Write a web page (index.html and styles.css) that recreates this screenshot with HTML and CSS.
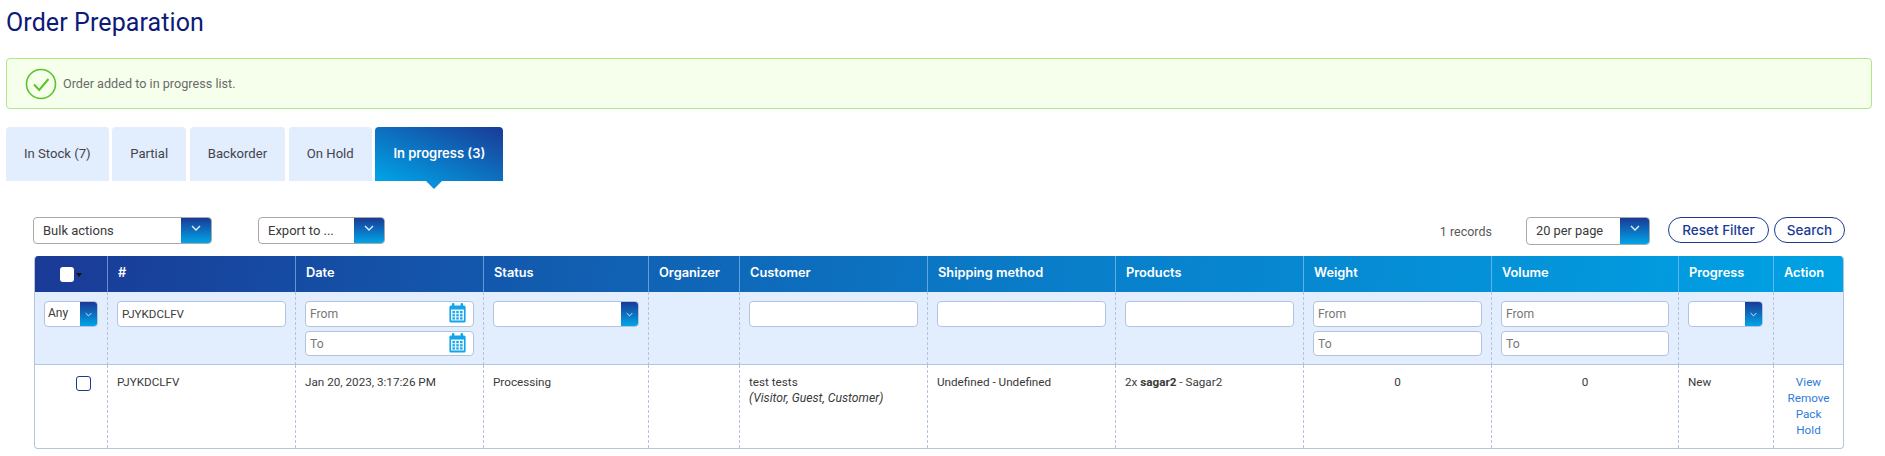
FILE: index.html
```html
<!DOCTYPE html>
<html lang="en">
<head>
<meta charset="utf-8">
<title>Order Preparation</title>
<link rel="stylesheet" href="styles.css">
</head>
<body>
<svg class="defs" width="0" height="0" aria-hidden="true">
  <symbol id="cal" viewBox="0 0 17 20">
    <rect x="3" y="0" width="2.4" height="5" rx="1" fill="#12a5ec"/>
    <rect x="11.6" y="0" width="2.4" height="5" rx="1" fill="#12a5ec"/>
    <path d="M2 2.5h13a1.6 1.6 0 0 1 1.6 1.6v13.8a1.6 1.6 0 0 1-1.6 1.6H2a1.6 1.6 0 0 1-1.6-1.6V4.100a1.600 1.600 0 0 1 1.600-1.600z" fill="#12a5ec"/>
    <rect x="2" y="6.500" width="13" height="11" fill="#eaf6fd"/>
    <g fill="#12a5ec">
      <rect x="3.500" y="8" width="2.400" height="2.200"/><rect x="7.300" y="8" width="2.400" height="2.200"/><rect x="11.100" y="8" width="2.400" height="2.200"/>
      <rect x="3.500" y="11.200" width="2.400" height="2.200"/><rect x="7.300" y="11.200" width="2.400" height="2.200"/><rect x="11.100" y="11.200" width="2.400" height="2.200"/>
      <rect x="3.500" y="14.300" width="2.400" height="2.200"/><rect x="7.300" y="14.300" width="2.400" height="2.200"/><rect x="11.100" y="14.300" width="2.400" height="2.200"/>
    </g>
  </symbol>
  <symbol id="chev" viewBox="0 0 10 6">
    <path d="M1 1l4 4 4-4" fill="none" stroke="#e8f3ff" stroke-width="1.300"/>
  </symbol>
</svg>
<main class="page">
  <h1 class="title">Order Preparation</h1>

  <div class="alert">
    <svg class="alert-icon" viewBox="0 0 32 32" aria-hidden="true">
      <circle cx="16" cy="16" r="14.500" fill="none" stroke="#5cc42b" stroke-width="1.600"/>
      <path d="M9 16.500l5.200 5.500L23.500 11" fill="none" stroke="#5cc42b" stroke-width="2"/>
    </svg>
    <span>Order added to in progress list.</span>
  </div>

  <nav class="tabs">
    <a class="tab">In Stock (7)</a>
    <a class="tab">Partial</a>
    <a class="tab">Backorder</a>
    <a class="tab">On Hold</a>
    <a class="tab tab-active">In progress (3)</a>
  </nav>

  <div class="toolbar">
    <div class="select select-bulk"><span class="select-text">Bulk actions</span><span class="select-btn"><svg class="chev"><use href="#chev"/></svg></span></div>
    <div class="select select-export"><span class="select-text">Export to ...</span><span class="select-btn"><svg class="chev"><use href="#chev"/></svg></span></div>
    <span class="records">1 records</span>
    <div class="select select-page"><span class="select-text">20 per page</span><span class="select-btn"><svg class="chev"><use href="#chev"/></svg></span></div>
    <button class="pill pill-reset">Reset Filter</button>
    <button class="pill">Search</button>
  </div>

  <div class="table-wrap">
    <table class="grid">
      <colgroup>
        <col class="c-check"><col class="c-wide"><col class="c-wide"><col class="c-status"><col class="c-org"><col class="c-wide"><col class="c-wide"><col class="c-wide"><col class="c-wide"><col class="c-vol"><col class="c-prog"><col class="c-act">
      </colgroup>
      <thead>
        <tr class="head">
          <th class="th-check"><span class="head-box"></span><span class="head-caret"></span></th>
          <th>#</th><th>Date</th><th>Status</th><th>Organizer</th><th>Customer</th><th>Shipping method</th><th>Products</th><th>Weight</th><th>Volume</th><th>Progress</th><th>Action</th>
        </tr>
        <tr class="filters">
          <td><div class="select select-sm select-any"><span class="select-text">Any</span><span class="select-btn"><svg class="chev chev-sm"><use href="#chev"/></svg></span></div></td>
          <td><input class="field field-value" value="PJYKDCLFV"></td>
          <td>
            <div class="field-icon"><input class="field" placeholder="From"><svg class="cal"><use href="#cal"/></svg></div>
            <div class="field-icon"><input class="field" placeholder="To"><svg class="cal"><use href="#cal"/></svg></div>
          </td>
          <td><div class="select select-sm"><span class="select-text"></span><span class="select-btn"><svg class="chev chev-sm"><use href="#chev"/></svg></span></div></td>
          <td></td>
          <td><input class="field"></td>
          <td><input class="field"></td>
          <td><input class="field"></td>
          <td><input class="field" placeholder="From"><input class="field field-to" placeholder="To"></td>
          <td><input class="field" placeholder="From"><input class="field field-to" placeholder="To"></td>
          <td><div class="select select-sm select-prog"><span class="select-text"></span><span class="select-btn"><svg class="chev chev-sm"><use href="#chev"/></svg></span></div></td>
          <td></td>
        </tr>
      </thead>
      <tbody>
        <tr class="row">
          <td class="td-check"><span class="row-box"></span></td>
          <td>PJYKDCLFV</td>
          <td>Jan 20, 2023, 3:17:26 PM</td>
          <td>Processing</td>
          <td></td>
          <td>test tests<br><em>(Visitor, Guest, Customer)</em></td>
          <td>Undefined - Undefined</td>
          <td>2x <strong>sagar2</strong> - Sagar2</td>
          <td class="center">0</td>
          <td class="center">0</td>
          <td>New</td>
          <td class="center actions"><a>View</a><a>Remove</a><a>Pack</a><a>Hold</a></td>
        </tr>
      </tbody>
    </table>
  </div>
</main>
</body>
</html>
```
FILE: styles.css
```css
* { box-sizing: border-box; }
html, body { margin: 0; padding: 0; background: #fff; }
body { font-family: Roboto, "Liberation Sans", sans-serif; font-size: 11.7px; line-height: 16px; color: #3a3a3a; }
.defs { position: absolute; }
.page { padding: 0 13px 0 6px; }

.title { margin: 0; padding-top: 9px; font-size: 25px; line-height: 28px; font-weight: 400; color: #0d1a78; letter-spacing: .1px; }

.alert { display: flex; align-items: center; gap: 6px; height: 51px; margin-top: 21px; padding-left: 18px; background: #f5ffec; border: 1px solid #afe888; border-radius: 4px; font-size: 12.65px; color: #6a6a6a; }
.alert-icon { width: 32px; height: 32px; flex: none; }

.tabs { display: flex; gap: 3.7px; margin-top: 18px; }
.tab { display: block; height: 54px; padding: 0 18px; line-height: 53px; font-size: 13.1px; color: #44444c; background: #e2edfd; border-radius: 4px 4px 0 0; }
.tab-active { position: relative; color: #fff; font-family: Inter, sans-serif; font-size: 13px; font-weight: 600; background: linear-gradient(to bottom left, #1a3a96, #00a5e8); }
.tab-active::after { content: ""; position: absolute; left: 50%; top: 100%; margin-left: -13px; border: 8.500px solid transparent; border-bottom: 0; border-top-color: #0a8fd8; }

.toolbar { display: flex; align-items: flex-start; margin-top: 36px; padding: 0 27px; }
.select { display: flex; height: 27px; background: #fff; border: 1px solid #a9a9a9; border-radius: 4px; overflow: hidden; font-size: 13px; color: #3a3a3a; }
.select-text { flex: 1; min-width: 0; padding-left: 9px; line-height: 25px; }
.select-btn { display: flex; justify-content: center; padding-top: 7px; width: 30px; flex: none; background: linear-gradient(#1a3a96, #00a5e8); }
.chev { width: 10px; height: 6px; }
.select-bulk { width: 179px; }
.select-export { width: 127px; margin-left: 46px; }
.records { margin-left: auto; margin-top: 7px; font-size: 12.5px; color: #5a5a5a; }
.select-page { width: 124px; height: 28px; margin-left: 34px; font-size: 12.8px; }
.select-page .select-btn { width: 29px; }
.pill { height: 26px; padding: 0; background: #fff; border: 1px solid #1a3a96; border-radius: 13px; font-family: Inter, sans-serif; font-size: 13.5px; font-weight: 500; color: #1a3a96; }
.pill-reset { width: 101px; margin-left: 18px; margin-right: 5px; }
.pill:not(.pill-reset) { width: 71px; }

.table-wrap { margin: 11px 28px 0; border: 1px solid #b3c6e0; border-top: 0; border-radius: 4px; overflow: hidden; }
.grid { width: 100%; table-layout: fixed; border-collapse: separate; border-spacing: 0; }
.c-check { width: 72px; }
.c-wide { width: 188px; }
.c-status { width: 165px; }
.c-org { width: 91px; }
.c-vol { width: 187px; }
.c-prog { width: 95px; }
.c-act { width: auto; }

.head { height: 36px; background: linear-gradient(100deg, #1a3a96, #0a7cc8 55%, #00a2e4); }
.head th { padding: 0 0 2px 10px; text-align: left; font-family: Inter, sans-serif; font-size: 12.8px; font-weight: 600; color: #fff; border-left: 1px solid rgba(170, 205, 245, .55); }
.head th:first-child { border-left: 0; }
.head .th-check { padding: 0 0 0 25px; }
.head-box { display: inline-block; width: 14px; height: 15px; background: #fff; border-radius: 3px; vertical-align: middle; }
.head-caret { display: inline-block; margin-left: 2px; border: 3px solid transparent; border-top: 4px solid #111; border-bottom: 0; vertical-align: middle; }

.filters { height: 73px; background: #e2edfd; }
.filters td { padding: 9px 9px 0; vertical-align: top; border-left: 1px dashed #b3c3dd; border-bottom: 1px solid #b3c6e0; }
.filters td:first-child { border-left: 0; }
.field { display: block; width: 100%; height: 26px; padding: 0 4px; background: #fff; border: 1px solid #b3c3dd; border-radius: 4px; outline: 0; font: 12.2px/24px Roboto, sans-serif; color: #3a3a3a; }
.field-value { font-size: 11.6px; }
.field::placeholder { color: #777; opacity: 1; }
.field-to { height: 25px; margin-top: 4px; }
.field-icon { position: relative; }
.field-icon + .field-icon { margin-top: 4px; }
.field-icon + .field-icon .field { height: 25px; }
.cal { position: absolute; right: 8px; top: 2px; width: 17px; height: 20px; }
.select-sm { height: 26px; border-color: #b3c3dd; font-size: 12px; }
.select-sm .select-btn { width: 17px; padding-top: 10px; }
.select-sm .select-text { padding-left: 3px; line-height: 23px; }
.chev-sm { width: 7px; height: 5px; }
.select-any { width: 54px; }
.select-prog { width: 75px; }

.row td { height: 83px; padding: 9px 9px 0; vertical-align: top; border-left: 1px dashed #b3c3dd; overflow: visible; white-space: nowrap; }
.row td:first-child { border-left: 0; }
.row .td-check { padding: 11px 0 0 41px; }
.row-box { display: block; width: 15px; height: 15px; border: 1.500px solid #1a3a96; border-radius: 3px; }
.center { text-align: center; }
.actions a { display: block; color: #2f7bdc; }
.row em { font-style: italic; font-size: 12.2px; }
.row strong { font-weight: 700; }
```
